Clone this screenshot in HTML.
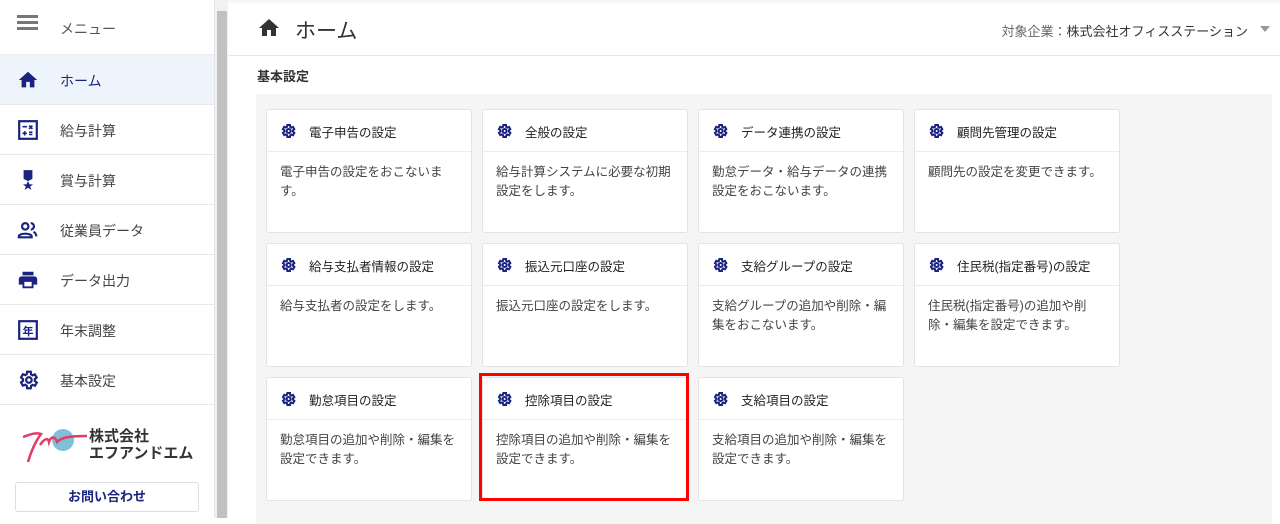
<!DOCTYPE html>
<html><head><meta charset="utf-8"><style>
*{box-sizing:border-box;margin:0;padding:0}
body{width:1280px;height:518px;overflow:hidden;font-family:"Liberation Sans","Noto Sans CJK JP",sans-serif;background:#fff;position:relative;color:#333}
.side{position:absolute;left:0;top:0;width:214px;height:518px;background:#fff}
.sb{position:absolute;left:214px;top:0;width:14px;height:518px;background:#f1f1f1;border-left:1px solid #e6e6e6}
.sb div{position:absolute;left:2px;top:11px;width:10px;height:507px;background:#c1c1c1}
.row{position:absolute;left:0;width:214px;height:50px;border-bottom:1px solid #e8e8e8;font-size:14px;color:#444}
.row svg{position:absolute;left:17px;top:14px}
.row span{position:absolute;left:60px;top:16px}
.main{position:absolute;left:228px;top:0;right:0;height:518px}
.hdr{height:56px;border-bottom:1px solid #e6e6e6;position:relative;box-shadow:inset 0 4px 4px -3px #eee}
.panel{position:absolute;left:28px;top:94px;width:1016px;height:430px;background:#f5f5f5}
.card{position:absolute;width:206px;height:124px;background:#fff;border:1px solid #e3e3e3;border-radius:3px}
.card .t{height:42px;border-bottom:1px solid #ebebeb;font-size:12.5px;color:#222;padding:12px 0 0 42px;position:relative}
.card .t svg{position:absolute;left:13px;top:13px}
.card .b{font-size:12.5px;color:#444;line-height:19px;padding:11px 12px 0 13px}
</style></head><body>
<div class="side">
 <div class="row" style="top:0;height:55px;border-bottom:1px solid #eee"><svg width="22" height="18" viewBox="0 0 22 18"><rect y="1" width="21" height="3" fill="#777"/><rect y="7" width="21" height="3" fill="#777"/><rect y="13" width="21" height="3" fill="#777"/></svg><span style="top:19px;color:#555">メニュー</span></div>
 <div class="row" style="top:55px;background:#eef4fc;color:#1a237e"><svg width="22" height="22" viewBox="0 0 24 24"><path d="M10 20v-6h4v6h5v-8h3L12 3 2 12h3v8z" fill="#1a237e"/></svg><span>ホーム</span></div>
 <div class="row" style="top:105px"><svg width="22" height="22" viewBox="0 0 20 20"><rect x="2" y="2" width="16" height="16" fill="none" stroke="#1a237e" stroke-width="2"/><path d="M5 7h4M11 6l3 3M14 6l-3 3M5 13h4M7 11v4M11 12h3M11 14h3" stroke="#1a237e" stroke-width="1.5"/></svg><span>給与計算</span></div>
 <div class="row" style="top:155px"><svg width="22" height="22" viewBox="0 0 20 20"><path d="M6 1h8v8l-4 2-4-2z" fill="#1a237e"/><path d="M10 11l1.5 3h3l-2.5 2 1 3-3-2-3 2 1-3-2.5-2h3z" fill="#1a237e"/></svg><span>賞与計算</span></div>
 <div class="row" style="top:205px"><svg width="22" height="22" viewBox="0 0 24 24"><circle cx="9" cy="8" r="3.5" fill="none" stroke="#1a237e" stroke-width="2.4"/><path d="M2 19c0-4 14-4 14 0v1H2z" fill="none" stroke="#1a237e" stroke-width="2.4"/><path d="M15 4.5a3.5 3.5 0 010 7M18 14c2 1 3 2 3 5" fill="none" stroke="#1a237e" stroke-width="2.4"/></svg><span>従業員データ</span></div>
 <div class="row" style="top:255px"><svg width="22" height="22" viewBox="0 0 24 24"><path d="M19 8H5c-1.7 0-3 1.3-3 3v6h4v4h12v-4h4v-6c0-1.7-1.3-3-3-3zm-3 11H8v-5h8v5zm2-16H6v4h12z" fill="#1a237e"/></svg><span>データ出力</span></div>
 <div class="row" style="top:305px"><svg width="22" height="22" viewBox="0 0 20 20"><rect x="2" y="2" width="16" height="16" fill="none" stroke="#1a237e" stroke-width="2"/><text x="10" y="14.5" font-size="10" font-weight="bold" text-anchor="middle" fill="#1a237e" font-family="Noto Sans CJK JP">年</text></svg><span>年末調整</span></div>
 <div class="row" style="top:355px"><svg width="22" height="22" viewBox="0 0 24 24"><path d="M19.4 13a7.5 7.5 0 000-2l2.1-1.6-2-3.5-2.5 1a7 7 0 00-1.7-1L15 3h-4l-.4 2.7a7 7 0 00-1.7 1l-2.5-1-2 3.5L6.6 11a7.5 7.5 0 000 2l-2.2 1.6 2 3.5 2.5-1a7 7 0 001.7 1L11 21h4l.4-2.7a7 7 0 001.7-1l2.5 1 2-3.5z" fill="none" stroke="#1a237e" stroke-width="2.4"/><circle cx="13" cy="12" r="3" fill="none" stroke="#1a237e" stroke-width="2.4"/></svg><span>基本設定</span></div>
 <svg style="position:absolute;left:20px;top:425px" width="70" height="42" viewBox="0 0 70 42"><circle cx="43" cy="15" r="11" fill="#7fbfd8"/><path d="M3 12c6-2 12-5 18-3-6 8-10 18-13 28M20 20c4-6 8-8 9-3 2-6 6-6 8 0 4-4 10-6 30-6" fill="none" stroke="#e03c64" stroke-width="2.5"/></svg>
 <div style="position:absolute;left:89px;top:428px;font-size:15px;font-weight:bold;color:#333;line-height:17px">株式会社<br>エフアンドエム</div>
 <div style="position:absolute;left:15px;top:482px;width:184px;height:30px;border:1px solid #ddd;border-radius:3px;text-align:center;font-size:13px;font-weight:bold;color:#1a237e;line-height:28px">お問い合わせ</div>
</div>
<div class="sb"><div></div></div>
<div class="main">
 <div class="hdr">
  <svg style="position:absolute;left:29px;top:16px" width="24" height="24" viewBox="0 0 24 24"><path d="M10 20v-6h4v6h5v-8h3L12 3 2 12h3v8z" fill="#333"/></svg>
  <div style="position:absolute;left:67px;top:15px;font-size:21px;color:#333">ホーム</div>
  <div style="position:absolute;right:32px;top:21px;font-size:13px;color:#666">対象企業：<span style="color:#333">株式会社オフィスステーション</span></div>
  <div style="position:absolute;right:10px;top:26px;border-left:5px solid transparent;border-right:5px solid transparent;border-top:6px solid #999"></div>
 </div>
 <div style="position:absolute;left:29px;top:66px;font-size:13px;font-weight:bold;color:#333">基本設定</div>
 <div class="panel"></div>
</div>
<div id="cards"></div>
<script>
var g='<svg width="16" height="16" viewBox="0 0 24 24"><path d="M19.4 13a7.5 7.5 0 000-2l2.1-1.6-2-3.5-2.5 1a7 7 0 00-1.7-1L15 3h-4l-.4 2.7a7 7 0 00-1.7 1l-2.5-1-2 3.5L6.6 11a7.5 7.5 0 000 2l-2.2 1.6 2 3.5 2.5-1a7 7 0 001.7 1L11 21h4l.4-2.7a7 7 0 001.7-1l2.5 1 2-3.5z" fill="none" stroke="#1a237e" stroke-width="3"/><circle cx="13" cy="12" r="3" fill="none" stroke="#1a237e" stroke-width="3"/></svg>';
var d=[["電子申告の設定","電子申告の設定をおこないま<br>す。"],["全般の設定","給与計算システムに必要な初期<br>設定をします。"],["データ連携の設定","勤怠データ・給与データの連携<br>設定をおこないます。"],["顧問先管理の設定","顧問先の設定を変更できます。"],
["給与支払者情報の設定","給与支払者の設定をします。"],["振込元口座の設定","振込元口座の設定をします。"],["支給グループの設定","支給グループの追加や削除・編<br>集をおこないます。"],["住民税(指定番号)の設定","住民税(指定番号)の追加や削<br>除・編集を設定できます。"],
["勤怠項目の設定","勤怠項目の追加や削除・編集を<br>設定できます。"],["控除項目の設定","控除項目の追加や削除・編集を<br>設定できます。"],["支給項目の設定","支給項目の追加や削除・編集を<br>設定できます。"]];
var h='';d.forEach(function(c,i){var x=266+216*(i%4),y=109+134*Math.floor(i/4);h+='<div class="card" style="left:'+x+'px;top:'+y+'px"><div class="t">'+g+c[0]+'</div><div class="b">'+c[1]+'</div></div>';});
h+='<div style="position:absolute;left:479px;top:373px;width:210px;height:128px;border:3px solid #f00"></div>';
document.getElementById('cards').innerHTML=h;
</script>
</body></html>
